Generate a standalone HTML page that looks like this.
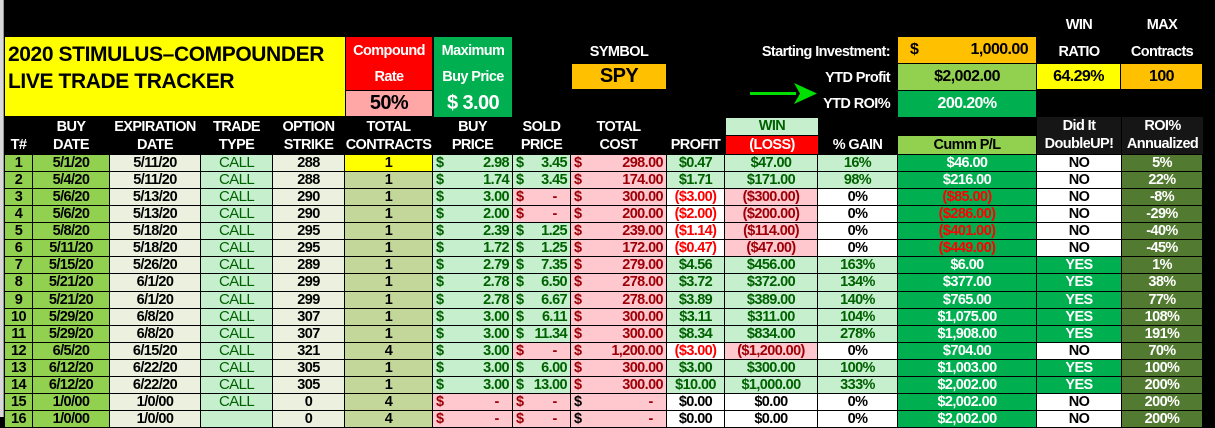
<!DOCTYPE html>
<html><head><meta charset="utf-8"><style>
*{margin:0;padding:0;box-sizing:border-box}
body{width:1215px;height:417px;background:#000;overflow:hidden;position:relative;font-family:"Liberation Sans",Arial,sans-serif;font-weight:bold;font-size:14.5px;letter-spacing:-0.6px;color:#fff}
.strip{position:absolute;left:0;top:0;width:4px;height:417px;background:#d9d9d9;border-right:1px solid #999}
.a{position:absolute;text-align:center;line-height:18px;white-space:nowrap}
table{position:absolute;left:4px;top:154px;border-spacing:1px;background:#000;table-layout:fixed}
td{height:16.07px;line-height:16px;padding:0 3px;white-space:nowrap;overflow:hidden;text-align:center;color:#000;font-size:14.5px;letter-spacing:-0.6px}
.t,.bd{background:#92d050}
.ed,.st{background:#ebf1de}
.ty{background:#c6efce;color:#006100;font-weight:normal;font-size:15px}
.ct{background:#c4d79b}
.y{background:#ffff00}
.g{background:#c6efce;color:#006100}
.r{background:#ffc7ce;color:#9c0006}
.w{background:#fff;color:#000}
.wr{background:#fff;color:#f00}
.cu{background:#00b050;color:#fff}
.cr{background:#00b050;color:#f00}
.ro{background:#527a30;color:#fff}
.m{display:flex;justify-content:space-between}
</style></head><body>
<div class="strip"></div>
<div style="position:absolute;left:5px;top:37px;width:340px;height:79px;background:#ffff00;color:#000;font-size:21px;letter-spacing:-0.4px;line-height:27px;padding:4px 0 0 3px">2020 STIMULUS–COMPOUNDER<br>LIVE TRADE TRACKER</div>
<div class="a" style="left:346px;top:37px;width:86px;height:53px;background:#ff0000;line-height:26px;padding-top:1px">Compound<br>Rate</div>
<div class="a" style="left:346px;top:91px;width:86px;height:25px;background:#ffa7a7;color:#000;font-size:20px;line-height:25px">50%</div>
<div class="a" style="left:434px;top:37px;width:78px;height:80px;background:#00b050;line-height:26px;padding-top:1px">Maximum<br>Buy Price<br><span style="font-size:20px">$ 3.00</span></div>
<div class="a" style="left:572px;top:43px;width:94px">SYMBOL</div>
<div class="a" style="left:572px;top:64px;width:94px;height:25px;background:#ffc000;color:#000;font-size:20px;line-height:25px">SPY</div>
<div class="a" style="left:700px;top:43px;width:190px;text-align:right">Starting Investment:</div>
<div class="a" style="left:700px;top:69px;width:190px;text-align:right">YTD Profit</div>
<div class="a" style="left:700px;top:95px;width:190px;text-align:right">YTD ROI%</div>
<div class="a" style="left:898px;top:37px;width:138px;height:26px;background:#ffc000;color:#000;font-size:16px;line-height:26px;display:flex;justify-content:space-between;padding:0 8px 0 12px"><span>$</span><span>1,000.00</span></div>
<div class="a" style="left:898px;top:64px;width:138px;height:26px;background:#92d050;color:#000;font-size:16px;line-height:26px">$2,002.00</div>
<div class="a" style="left:898px;top:91px;width:138px;height:26px;background:#00b050;font-size:16px;line-height:26px">200.20%</div>
<div class="a" style="left:1037px;top:16px;width:84px">WIN</div>
<div class="a" style="left:1037px;top:43px;width:84px">RATIO</div>
<div class="a" style="left:1121px;top:16px;width:82px">MAX</div>
<div class="a" style="left:1121px;top:43px;width:82px">Contracts</div>
<div class="a" style="left:1037px;top:64px;width:83px;height:25px;background:#ffff00;color:#000;font-size:16px;line-height:25px">64.29%</div>
<div class="a" style="left:1121px;top:64px;width:81px;height:25px;background:#ffc000;color:#000;font-size:16px;line-height:25px">100</div>
<svg style="position:absolute;left:748px;top:82px" width="72" height="24"><path d="M2 10H48V13H2Z" fill="#00e000"/><path d="M46 1L69 11.5L46 22L52 11.5Z" fill="#00e000"/></svg>
<div class="a" style="left:5px;top:136px;width:27px">T#</div>
<div class="a" style="left:33px;top:118px;width:76px">BUY<br>DATE</div>
<div class="a" style="left:110px;top:118px;width:90px">EXPIRATION<br>DATE</div>
<div class="a" style="left:201px;top:118px;width:71px">TRADE<br>TYPE</div>
<div class="a" style="left:273px;top:118px;width:71px">OPTION<br>STRIKE</div>
<div class="a" style="left:345px;top:118px;width:87px">TOTAL<br>CONTRACTS</div>
<div class="a" style="left:433px;top:118px;width:79px">BUY<br>PRICE</div>
<div class="a" style="left:513px;top:118px;width:57px">SOLD<br>PRICE</div>
<div class="a" style="left:571px;top:118px;width:95px">TOTAL<br>COST</div>
<div class="a" style="left:667px;top:136px;width:57px">PROFIT</div>
<div class="a" style="left:726px;top:118px;width:92px;height:17px;line-height:17px;background:#c6efce;color:#006100">WIN</div>
<div class="a" style="left:726px;top:136px;width:92px;height:18px;background:#ff0000">(LOSS)</div>
<div class="a" style="left:818px;top:136px;width:79px">% GAIN</div>
<div class="a" style="left:898px;top:136px;width:138px;height:18px;background:#92d050;color:#000">Cumm P/L</div>
<div class="a" style="left:1037px;top:117px;width:84px;height:37px;background:#161616">Did It<br>DoubleUP!</div>
<div class="a" style="left:1122px;top:117px;width:81px;height:37px;background:#161616">ROI%<br>Annualized</div>
<table>
<colgroup><col style="width:27px"><col style="width:76px"><col style="width:90px"><col style="width:71px"><col style="width:71px"><col style="width:87px"><col style="width:79px"><col style="width:57px"><col style="width:95px"><col style="width:57px"><col style="width:92px"><col style="width:79px"><col style="width:138px"><col style="width:84px"><col style="width:80px"></colgroup>
<tr><td class="t">1</td><td class="bd">5/1/20</td><td class="ed">5/11/20</td><td class="ty">CALL</td><td class="st">288</td><td class="y">1</td><td class="g"><div class="m"><span>$</span><span>2.98</span></div></td><td class="g"><div class="m"><span>$</span><span>3.45</span></div></td><td class="r"><div class="m"><span>$</span><span>298.00</span></div></td><td class="g">$0.47</td><td class="g">$47.00</td><td class="g">16%</td><td class="cu">$46.00</td><td class="w">NO</td><td class="ro">5%</td></tr>
<tr><td class="t">2</td><td class="bd">5/4/20</td><td class="ed">5/11/20</td><td class="ty">CALL</td><td class="st">288</td><td class="ct">1</td><td class="g"><div class="m"><span>$</span><span>1.74</span></div></td><td class="g"><div class="m"><span>$</span><span>3.45</span></div></td><td class="r"><div class="m"><span>$</span><span>174.00</span></div></td><td class="g">$1.71</td><td class="g">$171.00</td><td class="g">98%</td><td class="cu">$216.00</td><td class="w">NO</td><td class="ro">22%</td></tr>
<tr><td class="t">3</td><td class="bd">5/6/20</td><td class="ed">5/13/20</td><td class="ty">CALL</td><td class="st">290</td><td class="ct">1</td><td class="g"><div class="m"><span>$</span><span>3.00</span></div></td><td class="r"><div class="m"><span>$</span><span>-&nbsp;&nbsp;&nbsp;</span></div></td><td class="r"><div class="m"><span>$</span><span>300.00</span></div></td><td class="wr">($3.00)</td><td class="r">($300.00)</td><td class="w">0%</td><td class="cr">($85.00)</td><td class="w">NO</td><td class="ro">-8%</td></tr>
<tr><td class="t">4</td><td class="bd">5/6/20</td><td class="ed">5/13/20</td><td class="ty">CALL</td><td class="st">290</td><td class="ct">1</td><td class="g"><div class="m"><span>$</span><span>2.00</span></div></td><td class="r"><div class="m"><span>$</span><span>-&nbsp;&nbsp;&nbsp;</span></div></td><td class="r"><div class="m"><span>$</span><span>200.00</span></div></td><td class="wr">($2.00)</td><td class="r">($200.00)</td><td class="w">0%</td><td class="cr">($286.00)</td><td class="w">NO</td><td class="ro">-29%</td></tr>
<tr><td class="t">5</td><td class="bd">5/8/20</td><td class="ed">5/18/20</td><td class="ty">CALL</td><td class="st">295</td><td class="ct">1</td><td class="g"><div class="m"><span>$</span><span>2.39</span></div></td><td class="g"><div class="m"><span>$</span><span>1.25</span></div></td><td class="r"><div class="m"><span>$</span><span>239.00</span></div></td><td class="wr">($1.14)</td><td class="r">($114.00)</td><td class="w">0%</td><td class="cr">($401.00)</td><td class="w">NO</td><td class="ro">-40%</td></tr>
<tr><td class="t">6</td><td class="bd">5/11/20</td><td class="ed">5/18/20</td><td class="ty">CALL</td><td class="st">295</td><td class="ct">1</td><td class="g"><div class="m"><span>$</span><span>1.72</span></div></td><td class="g"><div class="m"><span>$</span><span>1.25</span></div></td><td class="r"><div class="m"><span>$</span><span>172.00</span></div></td><td class="wr">($0.47)</td><td class="r">($47.00)</td><td class="w">0%</td><td class="cr">($449.00)</td><td class="w">NO</td><td class="ro">-45%</td></tr>
<tr><td class="t">7</td><td class="bd">5/15/20</td><td class="ed">5/26/20</td><td class="ty">CALL</td><td class="st">289</td><td class="ct">1</td><td class="g"><div class="m"><span>$</span><span>2.79</span></div></td><td class="g"><div class="m"><span>$</span><span>7.35</span></div></td><td class="r"><div class="m"><span>$</span><span>279.00</span></div></td><td class="g">$4.56</td><td class="g">$456.00</td><td class="g">163%</td><td class="cu">$6.00</td><td class="cu">YES</td><td class="ro">1%</td></tr>
<tr><td class="t">8</td><td class="bd">5/21/20</td><td class="ed">6/1/20</td><td class="ty">CALL</td><td class="st">299</td><td class="ct">1</td><td class="g"><div class="m"><span>$</span><span>2.78</span></div></td><td class="g"><div class="m"><span>$</span><span>6.50</span></div></td><td class="r"><div class="m"><span>$</span><span>278.00</span></div></td><td class="g">$3.72</td><td class="g">$372.00</td><td class="g">134%</td><td class="cu">$377.00</td><td class="cu">YES</td><td class="ro">38%</td></tr>
<tr><td class="t">9</td><td class="bd">5/21/20</td><td class="ed">6/1/20</td><td class="ty">CALL</td><td class="st">299</td><td class="ct">1</td><td class="g"><div class="m"><span>$</span><span>2.78</span></div></td><td class="g"><div class="m"><span>$</span><span>6.67</span></div></td><td class="r"><div class="m"><span>$</span><span>278.00</span></div></td><td class="g">$3.89</td><td class="g">$389.00</td><td class="g">140%</td><td class="cu">$765.00</td><td class="cu">YES</td><td class="ro">77%</td></tr>
<tr><td class="t">10</td><td class="bd">5/29/20</td><td class="ed">6/8/20</td><td class="ty">CALL</td><td class="st">307</td><td class="ct">1</td><td class="g"><div class="m"><span>$</span><span>3.00</span></div></td><td class="g"><div class="m"><span>$</span><span>6.11</span></div></td><td class="r"><div class="m"><span>$</span><span>300.00</span></div></td><td class="g">$3.11</td><td class="g">$311.00</td><td class="g">104%</td><td class="cu">$1,075.00</td><td class="cu">YES</td><td class="ro">108%</td></tr>
<tr><td class="t">11</td><td class="bd">5/29/20</td><td class="ed">6/8/20</td><td class="ty">CALL</td><td class="st">307</td><td class="ct">1</td><td class="g"><div class="m"><span>$</span><span>3.00</span></div></td><td class="g"><div class="m"><span>$</span><span>11.34</span></div></td><td class="r"><div class="m"><span>$</span><span>300.00</span></div></td><td class="g">$8.34</td><td class="g">$834.00</td><td class="g">278%</td><td class="cu">$1,908.00</td><td class="cu">YES</td><td class="ro">191%</td></tr>
<tr><td class="t">12</td><td class="bd">6/5/20</td><td class="ed">6/15/20</td><td class="ty">CALL</td><td class="st">321</td><td class="ct">4</td><td class="g"><div class="m"><span>$</span><span>3.00</span></div></td><td class="r"><div class="m"><span>$</span><span>-&nbsp;&nbsp;&nbsp;</span></div></td><td class="r"><div class="m"><span>$</span><span>1,200.00</span></div></td><td class="wr">($3.00)</td><td class="r">($1,200.00)</td><td class="w">0%</td><td class="cu">$704.00</td><td class="w">NO</td><td class="ro">70%</td></tr>
<tr><td class="t">13</td><td class="bd">6/12/20</td><td class="ed">6/22/20</td><td class="ty">CALL</td><td class="st">305</td><td class="ct">1</td><td class="g"><div class="m"><span>$</span><span>3.00</span></div></td><td class="g"><div class="m"><span>$</span><span>6.00</span></div></td><td class="r"><div class="m"><span>$</span><span>300.00</span></div></td><td class="g">$3.00</td><td class="g">$300.00</td><td class="g">100%</td><td class="cu">$1,003.00</td><td class="cu">YES</td><td class="ro">100%</td></tr>
<tr><td class="t">14</td><td class="bd">6/12/20</td><td class="ed">6/22/20</td><td class="ty">CALL</td><td class="st">305</td><td class="ct">1</td><td class="g"><div class="m"><span>$</span><span>3.00</span></div></td><td class="g"><div class="m"><span>$</span><span>13.00</span></div></td><td class="r"><div class="m"><span>$</span><span>300.00</span></div></td><td class="g">$10.00</td><td class="g">$1,000.00</td><td class="g">333%</td><td class="cu">$2,002.00</td><td class="cu">YES</td><td class="ro">200%</td></tr>
<tr><td class="t">15</td><td class="bd">1/0/00</td><td class="ed">1/0/00</td><td class="ty">CALL</td><td class="st">0</td><td class="ct">4</td><td class="r"><div class="m"><span>$</span><span>-&nbsp;&nbsp;&nbsp;</span></div></td><td class="r"><div class="m"><span>$</span><span>-&nbsp;&nbsp;&nbsp;</span></div></td><td class="r"><div class="m"><span style="color:#000">$</span><span>-&nbsp;&nbsp;&nbsp;</span></div></td><td class="w">$0.00</td><td class="w">$0.00</td><td class="w">0%</td><td class="cu">$2,002.00</td><td class="w">NO</td><td class="ro">200%</td></tr>
<tr><td class="t">16</td><td class="bd">1/0/00</td><td class="ed">1/0/00</td><td class="ty"></td><td class="st">0</td><td class="ct">4</td><td class="r"><div class="m"><span>$</span><span>-&nbsp;&nbsp;&nbsp;</span></div></td><td class="r"><div class="m"><span>$</span><span>-&nbsp;&nbsp;&nbsp;</span></div></td><td class="r"><div class="m"><span style="color:#000">$</span><span>-&nbsp;&nbsp;&nbsp;</span></div></td><td class="w">$0.00</td><td class="w">$0.00</td><td class="w">0%</td><td class="cu">$2,002.00</td><td class="w">NO</td><td class="ro">200%</td></tr>
</table>
</body></html>
